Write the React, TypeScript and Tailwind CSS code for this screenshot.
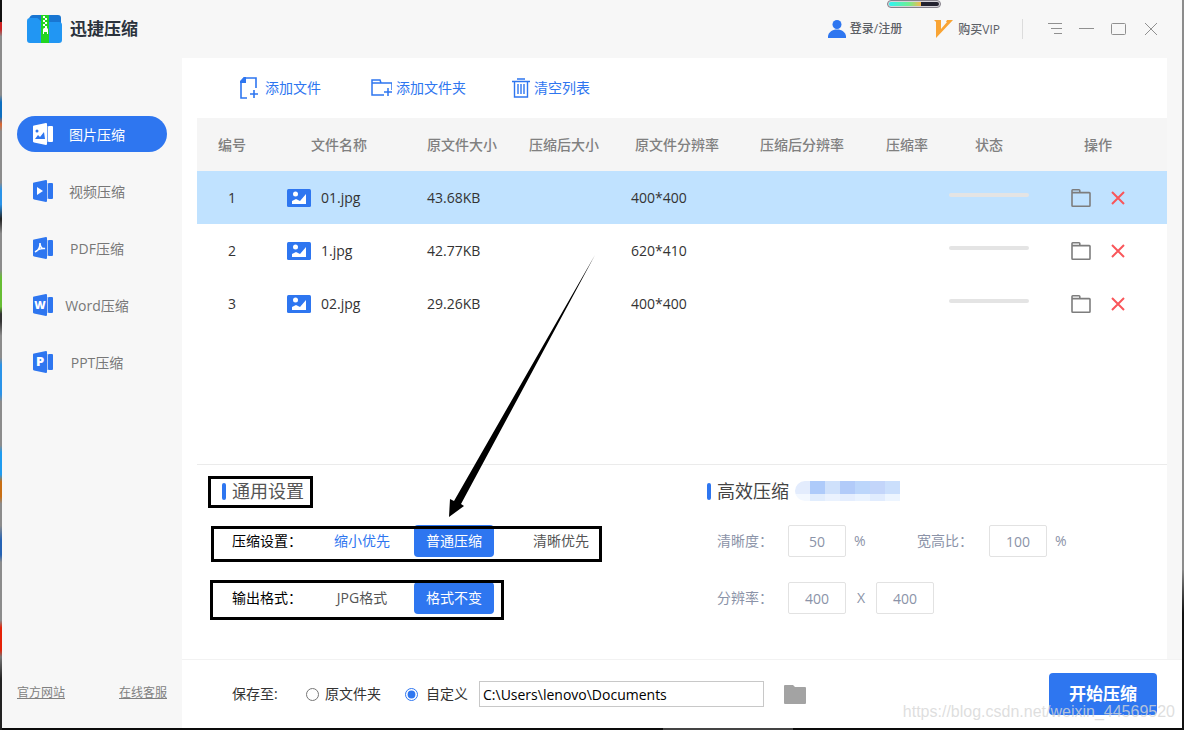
import { useState } from 'react';
import type { ReactNode } from 'react';

const navItems = ['图片压缩', '视频压缩', 'PDF压缩', 'Word压缩', 'PPT压缩'];

const files = [
  { id: 1, name: '01.jpg', size: '43.68KB', resolution: '400*400' },
  { id: 2, name: '1.jpg', size: '42.77KB', resolution: '620*410' },
  { id: 3, name: '02.jpg', size: '29.26KB', resolution: '400*400' },
];

const navGlyphs: ReactNode[] = [
  <g key="image">
    <circle cx="4" cy="8" r="1.5" />
    <path d="M2 16l3-4 2 2 4-5 1 7z" />
  </g>,
  <path key="video" d="M4 7v8l6-4z" />,
  <path key="pdf" d="M2 15c3-1 5-4 5-9 0 4 2 6 5 5.5-4-.5-7 .5-10 3.5" fill="none" stroke="currentColor" strokeWidth="1.5" />,
  <text key="word" x="7" y="15" fontSize="11" fontWeight="800" textAnchor="middle">W</text>,
  <text key="ppt" x="7" y="15" fontSize="13" fontWeight="800" textAnchor="middle">P</text>,
];

function NavIcon({ index, active }: { index: number; active: boolean }) {
  return (
    <svg width="20" height="22" viewBox="0 0 20 22" className={active ? 'text-white' : 'text-[#2e76f0]'} aria-hidden="true">
      <path d="M0 3.5Q0 2.800 1 2.600L13 0q1 0 1 1v20q0 1-1 1L1 19.400Q0 19.200 0 18.500z" fill="currentColor" />
      <path d="M14 3h1v16h-1z" fill="currentColor" opacity=".35" />
      <rect x="15" y="3" width="5" height="16" rx="1" fill="currentColor" />
      <g className={active ? 'text-[#2e76f0]' : 'text-white'} fill="currentColor">{navGlyphs[index]}</g>
    </svg>
  );
}

function Logo() {
  return (
    <svg width="35" height="28" viewBox="0 0 35 28" aria-hidden="true">
      <path d="M2 4Q3 0 6 0h25q3 0 3 3v9H2z" fill="#1976d2" />
      <path d="M0 6q0-3 3-3h7c2 0 3 4 6 4h16q3 0 3 3v15q0 3-3 3H3q-3 0-3-3z" fill="#2196f3" />
      <path d="M14 0h8v28h-8z" fill="#22d522" />
      <path d="M16 1h2v2h-2zM18 3h2v2h-2zM16 5h2v2h-2zM18 7h2v2h-2zM16 9h2v2h-2zM18 11h2v2h-2z" fill="#fff" />
      <path d="M16 14l1-1h3l1 1v5h-1v-2h-3v2h-1z" fill="#fff" />
    </svg>
  );
}

function TitleBar() {
  return (
    <header className="flex h-[58px] items-center pr-[23px] pl-[25px]">
      <Logo />
      <h1 className="ml-2 text-[17px] font-bold text-[#2b323c]">迅捷压缩</h1>
      <div className="ml-auto flex items-center text-xs font-medium text-[#5c6066]">
        <button className="flex items-center gap-1">
          <svg width="18" height="18" viewBox="0 0 18 18" fill="#2e76f0" aria-hidden="true">
            <circle cx="9" cy="4.500" r="4.500" />
            <path d="M0 18v-2c1-4 4-6.500 9-6.500s8 2.500 9 6.500v2z" />
          </svg>
          登录/注册
        </button>
        <button className="ml-8 flex items-center gap-1">
          <svg width="20" height="18" viewBox="0 0 20 18" aria-hidden="true">
            <path d="M0 0h7v9L13 2h-1l1-2h6L2 18V2z" fill="#f9a434" />
          </svg>
          <span className="pt-0.5">购买VIP</span>
        </button>
      </div>
      <div className="ml-[22px] h-5 w-px bg-[#dcdcdc]" />
      <div className="ml-6 flex items-center gap-4 text-[#909090]">
        <button aria-label="菜单">
          <svg width="16" height="16" viewBox="0 0 16 16" stroke="currentColor" aria-hidden="true"><path d="M1 2.500h14M4 7.500h11M7 12.500h8" /></svg>
        </button>
        <button aria-label="最小化">
          <svg width="16" height="16" viewBox="0 0 16 16" stroke="currentColor" aria-hidden="true"><path d="M0 7.500h15" /></svg>
        </button>
        <button aria-label="最大化">
          <svg width="16" height="16" viewBox="0 0 16 16" fill="none" stroke="currentColor" aria-hidden="true"><rect x=".5" y="2.500" width="14" height="11" rx="1" /></svg>
        </button>
        <button aria-label="关闭">
          <svg width="16" height="16" viewBox="0 0 16 16" stroke="currentColor" aria-hidden="true"><path d="M2 2l12 12M14 2L2 14" /></svg>
        </button>
      </div>
    </header>
  );
}

function Sidebar() {
  const [active, setActive] = useState(0);

  return (
    <aside className="flex w-[180px] shrink-0 flex-col px-[15px] pt-[58px]">
      <nav className="flex flex-col gap-[21px]">
        {navItems.map((item, index) => (
          <button
            key={item}
            onClick={() => setActive(index)}
            className={`flex h-9 items-center rounded-full pl-4 text-sm ${
              index === active ? 'bg-[#2e76f0] text-white' : 'text-[#777777]'
            }`}
          >
            <NavIcon index={index} active={index === active} />
            <span className="w-[88px] pt-0.5 text-center">{item}</span>
          </button>
        ))}
      </nav>
      <div className="mt-auto flex justify-between pb-[27px] text-xs text-[#808080] underline">
        <a href="#site">官方网站</a>
        <a href="#service">在线客服</a>
      </div>
    </aside>
  );
}

function Toolbar() {
  return (
    <div className="flex h-[60px] items-center gap-[46px] pl-[57px] text-sm text-[#2e76f0]">
      <button className="flex items-center gap-1">
        <svg width="22" height="22" viewBox="0 0 22 22" fill="none" stroke="currentColor" strokeWidth="1.6" aria-hidden="true">
          <path d="M8 21H2V5l3-4h12v10M11 17h8M15 13v8" />
          <path d="M1 6V4l4-4h2v6z" fill="currentColor" stroke="none" />
        </svg>
        添加文件
      </button>
      <button className="flex items-center gap-1">
        <svg width="25" height="20" viewBox="0 0 25 20" fill="none" stroke="currentColor" strokeWidth="1.5" aria-hidden="true">
          <path d="M17 17H5V2h8l1 3h11v7M5 5h10M17 14h8M21 10v8" />
        </svg>
        添加文件夹
      </button>
      <button className="flex items-center gap-1">
        <svg width="18" height="20" viewBox="0 0 18 20" fill="none" stroke="currentColor" strokeWidth="1.4" aria-hidden="true">
          <path d="M0 3.500h18M5 1h8M2.500 3.500v15.500h13V3.500M6 6v10M9 6v10M12 6v10" />
        </svg>
        清空列表
      </button>
    </div>
  );
}

function FileTable() {
  return (
    <table className="w-full table-fixed text-sm text-[#333333]">
      <colgroup>
        <col className="w-[70px]" />
        <col className="w-[144px]" />
        <col className="w-[102px]" />
        <col className="w-[102px]" />
        <col className="w-[124px]" />
        <col className="w-[126px]" />
        <col className="w-[84px]" />
        <col className="w-[80px]" />
        <col className="w-[138px]" />
      </colgroup>
      <thead>
        <tr className="h-[53px] bg-[#f5f5f5] text-[#808080]">
          {['编号', '文件名称', '原文件大小', '压缩后大小', '原文件分辨率', '压缩后分辨率', '压缩率', '状态', '操作'].map((title) => (
            <th key={title} className="p-0 font-medium whitespace-nowrap">{title}</th>
          ))}
        </tr>
      </thead>
      <tbody>
        {files.map((file) => (
          <tr key={file.id} className="h-[53px] first:bg-[#c0e2ff]">
            <td className="text-center">{file.id}</td>
            <td className="pl-5">
              <div className="flex items-center gap-2.5">
                <svg width="24" height="18" viewBox="0 0 24 18" aria-hidden="true">
                  <rect width="24" height="18" rx="1.5" fill="#2e76f0" />
                  <circle cx="8.500" cy="5" r="2.500" fill="#fff" />
                  <path d="M5 15v-3l4-2 4 2 6-7v10z" fill="#fff" />
                </svg>
                {file.name}
              </div>
            </td>
            <td className="pl-4">{file.size}</td>
            <td />
            <td className="pl-4">{file.resolution}</td>
            <td />
            <td />
            <td>
              <div className="mb-1.5 h-1 rounded-full bg-[#e4e4e4]" />
            </td>
            <td>
              <div className="flex items-center justify-center gap-5">
                <button aria-label="打开文件夹">
                  <svg width="20" height="18" viewBox="0 0 20 18" fill="none" stroke="#7d7d7d" strokeWidth="1.6" aria-hidden="true">
                    <path d="M1 16V1.500q0-.7.7-.7H8q.8 0 .8.800v2h9.500q.7 0 .7.700V16.500q0 .7-.7.700H1.700Q1 17.200 1 16.500zM1 3.600h8" />
                  </svg>
                </button>
                <button aria-label="删除">
                  <svg width="14" height="14" viewBox="0 0 14 14" stroke="#f9565a" strokeWidth="2" aria-hidden="true"><path d="M1 1l12 12M13 1L1 13" /></svg>
                </button>
              </div>
            </td>
          </tr>
        ))}
      </tbody>
    </table>
  );
}

function Choice({ active, children, className = 'text-[#555555]', onClick }: { active: boolean; children: string; className?: string; onClick: () => void }) {
  return (
    <button onClick={onClick} className={`h-8 w-20 rounded ${active ? 'bg-[#2e76f0] text-white' : className}`}>
      {children}
    </button>
  );
}

function NumberField({ label, value }: { label: string; value: string }) {
  return (
    <input
      aria-label={label}
      defaultValue={value}
      className="h-8 w-[58px] rounded-xs border border-[#e2e2e2] text-center outline-none"
    />
  );
}

const mosaic = [
  ['#e3ecfd', '#aecbfa', '#cfe1fb', '#b2cbf9', '#bcd6fb', '#c3d5fa', '#cbdffc'],
  ['#f3f8ff', '#e1edfd', '#eaf2fe', '#e5eefe', '#eaf3ff', '#e1ecfe', '#edf5ff'],
];

function Settings() {
  const [mode, setMode] = useState('普通压缩');
  const [format, setFormat] = useState('格式不变');

  return (
    <div className="relative ml-[15px] grid min-h-[195px] grid-cols-[510fr_460fr] border-t border-[#ebebeb] pt-3 text-sm">
      <section className="pl-[25px]">
        <h2 className="flex h-7 items-center gap-1.5 text-lg text-[#555555]">
          <span className="h-[17px] w-1 rounded-sm bg-[#2e76f0]" />
          通用设置
        </h2>
        <div className="mt-5 flex items-center gap-3 pl-2.5">
          <span className="w-[78px] text-black">压缩设置：</span>
          <Choice active={mode === '缩小优先'} onClick={() => setMode('缩小优先')} className="text-[#2e76f0]">缩小优先</Choice>
          <Choice active={mode === '普通压缩'} onClick={() => setMode('普通压缩')}>普通压缩</Choice>
          <div className="pl-[15px]">
            <Choice active={mode === '清晰优先'} onClick={() => setMode('清晰优先')}>清晰优先</Choice>
          </div>
        </div>
        <div className="mt-[25px] flex items-center gap-3 pl-2.5">
          <span className="w-[78px] text-black">输出格式：</span>
          <Choice active={format === 'JPG格式'} onClick={() => setFormat('JPG格式')}>JPG格式</Choice>
          <Choice active={format === '格式不变'} onClick={() => setFormat('格式不变')}>格式不变</Choice>
        </div>
      </section>

      <section className="text-[#8b93a8]">
        <h2 className="flex h-7 items-center gap-1.5 text-lg text-[#444444]">
          <span className="h-[17px] w-1 rounded-sm bg-[#2e76f0]" />
          高效压缩
          <span className="grid w-[105px] overflow-hidden rounded-l-full" aria-hidden="true">
            {mosaic.map((row, i) => (
              <span key={i} className={`flex ${i === 0 ? 'h-[13px]' : 'h-[7px]'}`}>
                {row.map((color) => (
                  <span key={color} className="flex-1" style={{ backgroundColor: color }} />
                ))}
              </span>
            ))}
          </span>
        </h2>
        <div className="mt-5 flex items-center gap-2 pl-2.5">
          <span className="w-[63px]">清晰度：</span>
          <NumberField label="清晰度" value="50" />
          <span className="w-[55px]">%</span>
          <span className="w-16">宽高比：</span>
          <NumberField label="宽高比" value="100" />
          <span>%</span>
        </div>
        <div className="mt-[25px] flex items-center gap-2 pl-2.5">
          <span className="w-[63px]">分辨率：</span>
          <NumberField label="分辨率宽" value="400" />
          <span className="w-3.5 text-center">X</span>
          <NumberField label="分辨率高" value="400" />
        </div>
      </section>

      {/* hand-drawn marks over the form */}
      <div className="pointer-events-none absolute top-[11px] left-[11px] h-8 w-[105px] border-3 border-black" />
      <div className="pointer-events-none absolute top-[61px] left-[14px] h-9 w-[391px] border-3 border-black" />
      <div className="pointer-events-none absolute top-[115px] left-[13px] h-10 w-[294px] border-3 border-black" />
      <svg className="pointer-events-none absolute -top-[211px] left-[251px]" width="150" height="266" viewBox="0 0 150 266" aria-hidden="true">
        <path d="M147 1L13 250l3 2L1 263l1-18 4 2z" />
      </svg>
    </div>
  );
}

function SaveBar() {
  return (
    <footer className="flex h-[69px] items-center border-t border-[#f2f2f2] bg-white pr-[25px] pl-[50px] text-sm text-[#333333]">
      <span className="w-[74px]">保存至:</span>
      <label className="flex items-center gap-1.5">
        <input type="radio" name="target" className="accent-[#2e76f0]" />
        原文件夹
      </label>
      <label className="ml-6 flex items-center gap-2">
        <input type="radio" name="target" defaultChecked className="accent-[#2e76f0]" />
        自定义
      </label>
      <input
        aria-label="保存路径"
        defaultValue="C:\Users\lenovo\Documents"
        className="ml-[11px] h-[26px] w-[285px] border border-[#c8c8c8] px-[3px] text-black outline-none"
      />
      <button aria-label="选择文件夹" className="ml-5">
        <svg width="22" height="19" viewBox="0 0 22 19" fill="#a3a3a3" aria-hidden="true"><path d="M0 1q0-1 1-1h8l2 2h10q1 0 1 1v15q0 1-1 1H1q-1 0-1-1z" /></svg>
      </button>
      <button className="ml-auto h-[42px] w-[108px] rounded bg-[#2e76f0] text-[17px] font-bold text-white">开始压缩</button>
    </footer>
  );
}

export default function App() {
  return (
    <div className="relative flex min-h-screen flex-col bg-linear-to-b from-[#8c8c8c] from-78% to-[#111111] to-84% px-[2px] font-['Open_Sans','Noto_Sans_CJK_SC',sans-serif]">
      {/* desktop showing past the window's left edge */}
      <div className="absolute inset-y-0 left-0 w-[2px] bg-[linear-gradient(#111_0_3%,#c22_3%_4%,#8c8c8c_5%_13%,#0d6fc0_14%_16%,#e2662c_17%,#8c8c8c_18%_25%,#2a93e8_26%_28%,#222_30%,#8c8c8c_32%_37%,#67bd34_38%_42%,#333_43%_44%,#8c8c8c_46%_49%,#2a93e8_50%_54%,#8c8c8c_55%_61%,#1f9cf0_62%_65%,#c96f14_66%_68%,#8c8c8c_69%_72%,#2563b5_74%_76%,#8c8c8c_77%_85%,#e52208_86%_89%,#777_90%,#222_93%_100%)]" />
      <div className="flex flex-1 flex-col bg-[#f7f7f7]">
        <TitleBar />
        <div className="flex flex-1">
          <Sidebar />
          <div className="flex min-w-0 flex-1 flex-col">
            <main className="mr-[15px] flex flex-1 flex-col bg-white">
              <Toolbar />
              <div className="flex-1 pl-[15px]">
                <FileTable />
              </div>
              <Settings />
            </main>
            <SaveBar />
          </div>
        </div>
      </div>
      <div className="h-0.5 bg-[linear-gradient(90deg,#0c0c0c_0_56%,#444_56%_67%,#0c0c0c_67%)]" />

      <div className="absolute top-0 left-3/4 ml-[-1px] h-2 w-[54px] rounded-full border border-[#85818a] bg-[#d5d2d8] p-px">
        <div className="h-full rounded-full bg-[linear-gradient(90deg,#2df4f4,#6fee91_40%,#f9b64a_64%,#23222f_64%)]" />
      </div>
      <p className="pointer-events-none absolute right-[9px] bottom-[6px] font-['Liberation_Sans',sans-serif] text-base text-[#d6d6d6]/80">
        https://blog.csdn.net/weixin_44569520
      </p>
    </div>
  );
}
